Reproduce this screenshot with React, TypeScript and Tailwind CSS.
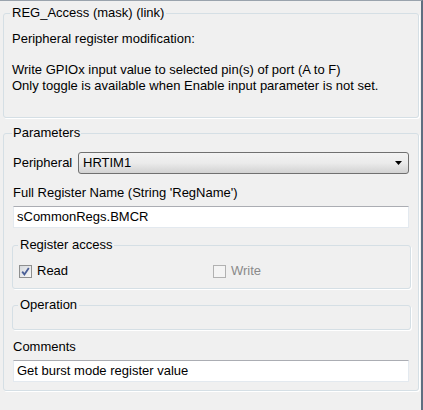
import React from 'react';

const font = { fontFamily: '"Liberation Sans", Arial, sans-serif' };

// Win7-style group box
const GroupBox = ({
  title,
  className,
  legendClass,
  children,
}: {
  title: string;
  className?: string;
  legendClass?: string;
  children?: React.ReactNode;
}) => (
  <fieldset
    className={
      'border border-[#d5dfe5] rounded-[3px] shadow-[1px_1px_0_#ffffff] ' + (className ?? '')
    }
  >
    <legend className={'px-[2px] leading-[16px] text-[13px] text-black ' + (legendClass ?? '')}>
      {title}
    </legend>
    {children}
  </fieldset>
);

const TextBox = ({ value }: { value: string }) => (
  <div className="h-[22px] bg-white border border-[#e3e9ef] border-t-[#abadb3] pl-[3px] flex items-center text-[13px] leading-[16px] text-black">
    {value}
  </div>
);

const CheckBox = ({ checked, disabled, label }: { checked?: boolean; disabled?: boolean; label: string }) => (
  <div className="flex items-center h-[16px]">
    {disabled ? (
      <span className="w-[13px] h-[13px] border border-[#b1b1b1] bg-[#f4f4f4]" />
    ) : (
      <span className="relative w-[13px] h-[13px] border border-[#8e8f8f] bg-gradient-to-br from-[#d6d9dd] to-[#f8f8f8] p-[2px]">
        {checked && (
          <svg
            viewBox="0 0 9 9"
            className="absolute left-[1px] top-[1px] w-[9px] h-[9px]"
          >
            <path d="M1.2 4.6 L3.4 7.4 L7.8 1" stroke="#4a5f97" strokeWidth="1.8" fill="none" />
          </svg>
        )}
      </span>
    )}
    <span className={'ml-[5px] text-[13px] leading-[16px] ' + (disabled ? 'text-[#8a8a8a]' : 'text-black')}>
      {label}
    </span>
  </div>
);

export default function App() {
  return (
    <div
      style={font}
      className="w-[423px] h-[410px] bg-[#f0f0f0] border-t border-t-[#9aa3ad] border-r-2 border-r-[#5f6e80] overflow-hidden text-[13px] leading-[16px] text-black"
    >
      {/* Description group */}
      <GroupBox
        title="REG_Access (mask) (link)"
        className="mt-[4px] ml-[3px] w-[416px] pl-[6px] pr-[6px] pb-[23px]"
      >
        <div className="pl-[2px] mt-[10px]">
          <div>Peripheral register modification:</div>
          <div className="h-[15px]" />
          <div>Write GPIOx input value to selected pin(s) of port (A to F)</div>
          <div>Only toggle is available when Enable input parameter is not set.</div>
        </div>
      </GroupBox>

      {/* Parameters group */}
      <GroupBox
        title="Parameters"
        className="mt-[7px] ml-[3px] w-[416px] pl-[8px] pr-[7px] pb-[8px]"
        legendClass="!px-[1px]"
      >
        <div className="pl-[1px] pr-[2px]">
          <div className="mt-[11px] flex items-center">
            <span className="w-[65px]">Peripheral</span>
            <div className="flex-1 h-[22px] rounded-[3px] border border-[#707070] bg-gradient-to-b from-[#f3f3f3] via-[#ebebeb] to-[#d2d2d2] flex items-center pl-[4px] pr-[6px]">
              <span className="flex-1">HRTIM1</span>
              <svg viewBox="0 0 7 4" className="w-[7px] h-[4px]">
                <path d="M0 0 H7 L3.5 4 Z" fill="#000" />
              </svg>
            </div>
          </div>
          <div className="mt-[11px]">Full Register Name (String 'RegName')</div>
          <div className="mt-[5px]">
            <TextBox value="sCommonRegs.BMCR" />
          </div>
        </div>

        <GroupBox title="Register access" className="mt-[9px] pl-[5px] pr-[6px] pb-[9px]">
          <div className="mt-[10px] pl-[1px] flex">
            <div className="w-[194px]">
              <CheckBox checked label="Read" />
            </div>
            <CheckBox disabled label="Write" />
          </div>
        </GroupBox>

        <GroupBox title="Operation" className="mt-[8px] pl-[5px] pr-[6px] pb-[16px]" />

        <div className="pl-[1px] pr-[2px]">
          <div className="mt-[9px]">Comments</div>
          <div className="mt-[5px]">
            <TextBox value="Get burst mode register value" />
          </div>
        </div>
      </GroupBox>
    </div>
  );
}
